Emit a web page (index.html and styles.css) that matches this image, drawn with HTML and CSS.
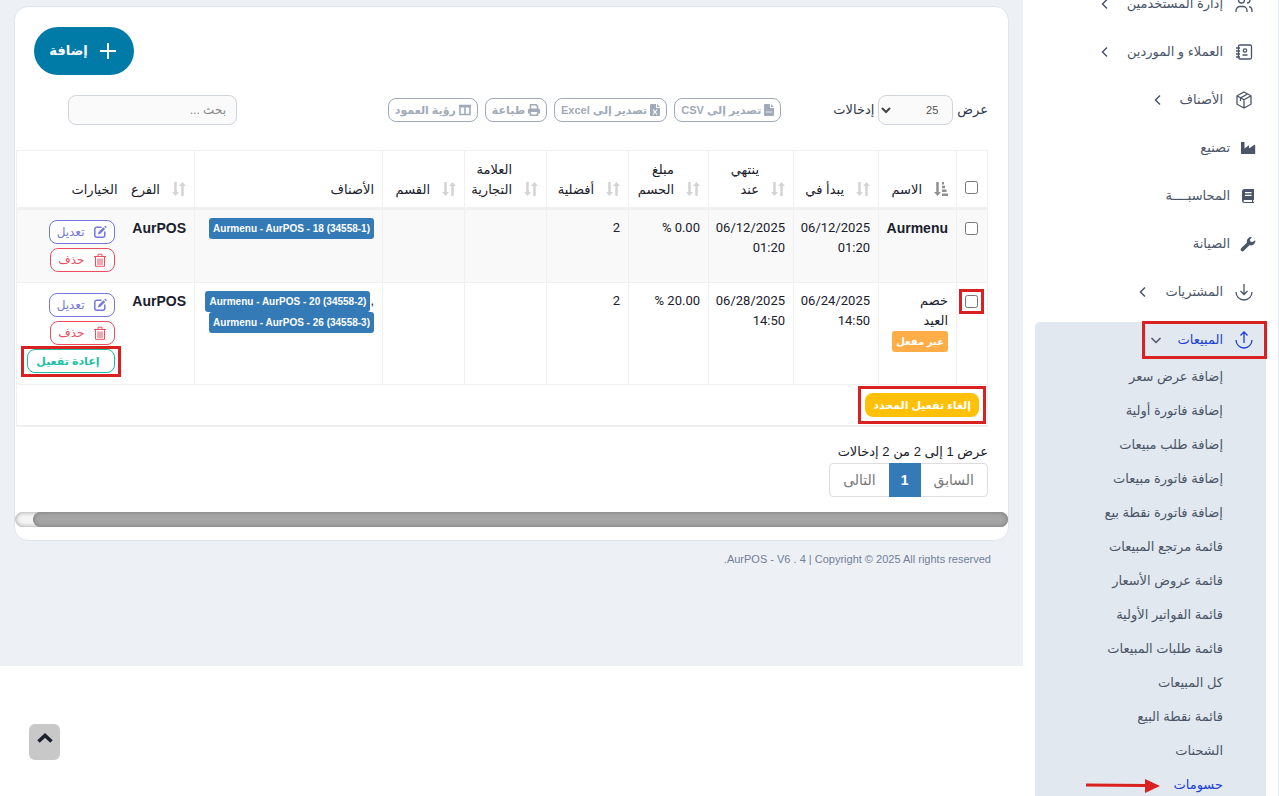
FILE: index.html
```html
<!DOCTYPE html>
<html lang="ar" dir="rtl">
<head>
    <meta charset="UTF-8">
    <meta name="viewport" content="width=device-width, initial-scale=1.0">
    <title>AurPOS</title>
    <link rel="stylesheet" href="styles.css">
</head>
<body>

    <!-- icons -->
    <svg class="sprite" aria-hidden="true">
        <symbol id="i-sort" viewBox="0 0 14 14">
            <path d="M3.500 0v11M10.500 14V3" fill="none" stroke="currentColor" stroke-width="2.500"/>
            <path d="M3.500 14L0 10h7zM10.500 0L14 4H7z" fill="currentColor"/>
        </symbol>
        <symbol id="i-sorted" viewBox="0 0 14 14">
            <path d="M3.500 0v11" fill="none" stroke="currentColor" stroke-width="2.500"/>
            <path d="M3.500 14L0 10h7zM8 0h2v2.500H8zM8 3.800h3v2.500H8zM8 7.600h4.500v2.500H8zM8 11.500h6V14H8z" fill="currentColor"/>
        </symbol>
        <symbol id="i-chevron" viewBox="0 0 12 12">
            <path d="M8 1.500L3.500 6 8 10.500" fill="none" stroke="currentColor" stroke-width="1.500"/>
        </symbol>
        <symbol id="i-edit" viewBox="0 0 14 14">
            <path d="M8.500 2.200H3.800a2 2 0 0 0-2 2v6a2 2 0 0 0 2 2h6a2 2 0 0 0 2-2V6.500" fill="none" stroke="currentColor" stroke-width="1.500"/>
            <path d="M5 9.400l.6-2.300 4.800-4.800 1.700 1.700-4.800 4.800zM11.200 1.500l1-1 1.700 1.700-1 1z" fill="currentColor"/>
        </symbol>
        <symbol id="i-trash" viewBox="0 0 14 14">
            <path d="M1 3.500h12M5 3.200V1.200h4v2M2.500 4v9.300h9V4M5 5.500v6.500M7 5.500v6.500M9 5.500v6.500" fill="none" stroke="currentColor"/>
        </symbol>
    </svg>

    <aside class="sidebar">
        <nav>
            <ul class="menu">
                <li><a class="menu-link" href="#">
                    <svg class="icon" viewBox="0 0 18 18"><circle cx="6.500" cy="5" r="3"/><path d="M1 17v-1.500a4 4 0 0 1 4-4h3a4 4 0 0 1 4 4V17M12 2a3 3 0 0 1 0 6M14 11.700a4 4 0 0 1 3 3.800V17"/></svg>
                    <span>إدارة المستخدمين</span>
                    <svg class="chevron"><use href="#i-chevron"/></svg>
                </a></li>
                <li><a class="menu-link" href="#">
                    <svg class="icon" viewBox="0 0 18 18"><rect x="3.500" y="2" width="13" height="14" rx="1.500"/><circle cx="10" cy="7.500" r="1.700"/><path d="M7.500 12h5M1 5h4M1 8h4M1 11h4M1 14h4"/></svg>
                    <span>العملاء و الموردين</span>
                    <svg class="chevron"><use href="#i-chevron"/></svg>
                </a></li>
                <li><a class="menu-link" href="#">
                    <svg class="icon" viewBox="0 0 18 18"><path d="M9 1l7 3.800v8.400L9 17l-7-3.800V4.800zM2 4.800l7 4 7-4M9 8.800V17M12.500 3l-7 3.900v3"/></svg>
                    <span>الأصناف</span>
                    <svg class="chevron"><use href="#i-chevron"/></svg>
                </a></li>
                <li><a class="menu-link solid" href="#">
                    <svg class="icon" viewBox="0 0 16 16"><path d="M1 2h3.500v6.500L9 5.300v3.200L14 5a.7.7 0 0 1 1.200.5V14H1z"/></svg>
                    <span>تصنيع</span>
                </a></li>
                <li><a class="menu-link solid" href="#">
                    <svg class="icon" viewBox="0 0 16 16"><path fill-rule="evenodd" d="M4.500 1H14v11h-.8v2H14v1H4.500A2.500 2.500 0 0 1 2 12.500v-9A2.500 2.500 0 0 1 4.500 1zM5 4v1.300h6.500V4zM5 6.700V8h6.500V6.700zM4.500 12a1 1 0 0 0 0 2H12v-2z"/></svg>
                    <span>المحاسبــــة</span>
                </a></li>
                <li><a class="menu-link solid" href="#">
                    <svg class="icon" viewBox="0 0 16 16"><path d="M15.200 4.200a4.200 4.200 0 0 1-5.500 4.900l-5.900 5.700a1.800 1.800 0 0 1-2.600-2.600l5.800-5.800A4.200 4.200 0 0 1 12 1.200L9.900 3.400l.3 2.200 2.300.3z"/></svg>
                    <span>الصيانة</span>
                </a></li>
                <li><a class="menu-link" href="#">
                    <svg class="icon" viewBox="0 0 18 18"><path d="M9 1v10.500M5.500 8L9 11.500 12.500 8M1 9a8 8 0 0 0 16 0"/></svg>
                    <span>المشتريات</span>
                    <svg class="chevron"><use href="#i-chevron"/></svg>
                </a></li>
                <li class="open">
                    <a class="menu-link active marked" href="#">
                        <svg class="icon" viewBox="0 0 18 18"><path d="M9 12V1M5.500 4.500L9 1l3.500 3.500M1 9a8 8 0 0 0 16 0"/></svg>
                        <span>المبيعات</span>
                        <svg class="chevron down"><use href="#i-chevron"/></svg>
                    </a>
                    <ul class="submenu">
                        <li><a href="#">إضافة عرض سعر</a></li>
                        <li><a href="#">إضافة فاتورة أولية</a></li>
                        <li><a href="#">إضافة طلب مبيعات</a></li>
                        <li><a href="#">إضافة فاتورة مبيعات</a></li>
                        <li><a href="#">إضافة فاتورة نقطة بيع</a></li>
                        <li><a href="#">قائمة مرتجع المبيعات</a></li>
                        <li><a href="#">قائمة عروض الأسعار</a></li>
                        <li><a href="#">قائمة الفواتير الأولية</a></li>
                        <li><a href="#">قائمة طلبات المبيعات</a></li>
                        <li><a href="#">كل المبيعات</a></li>
                        <li><a href="#">قائمة نقطة البيع</a></li>
                        <li><a href="#">الشحنات</a></li>
                        <li class="current">
                            <a href="#">حسومات</a>
                            <svg class="pointer" viewBox="0 0 75 16"><path d="M1 7l60 .6" stroke="currentColor" stroke-width="3"/><path d="M60 1l15 7-15 7z" fill="currentColor"/></svg>
                        </li>
                    </ul>
                </li>
            </ul>
        </nav>
    </aside>

    <main class="content">
        <section class="card">
            <div class="card-head">
                <button class="btn-add" type="button">
                    <svg viewBox="0 0 16 16"><path d="M8 0v16M0 8h16" stroke="currentColor" stroke-width="2"/></svg>
                    إضافة
                </button>
            </div>

            <div class="toolbar">
                <label class="length">
                    عرض
                    <span class="select-wrap">
                        <select>
                            <option>25</option>
                            <option>50</option>
                            <option>100</option>
                        </select>
                        <svg viewBox="0 0 10 7"><path d="M1 1l4 4 4-4" fill="none" stroke="currentColor" stroke-width="2"/></svg>
                    </span>
                    إدخالات
                </label>
                <div class="exports">
                    <button type="button"><svg class="file" viewBox="0 0 10 12"><path fill="currentColor" d="M1 0h5v4h4v7a1 1 0 0 1-1 1H1a1 1 0 0 1-1-1V1a1 1 0 0 1 1-1zM7 0l3 3H7z"/><path d="M2 8h6" stroke="#fff" stroke-width="1" stroke-dasharray="1.500 .7"/></svg> تصدير إلى CSV</button>
                    <button type="button"><svg class="file" viewBox="0 0 10 12"><path fill="currentColor" d="M1 0h5v4h4v7a1 1 0 0 1-1 1H1a1 1 0 0 1-1-1V1a1 1 0 0 1 1-1zM7 0l3 3H7z"/><path d="M3 5.500l4 5M7 5.500l-4 5" stroke="#fff" stroke-width="1.200"/></svg> تصدير إلى Excel</button>
                    <button type="button"><svg viewBox="0 0 12 12"><path d="M2.500 5V.8h5.700l1.300 1.300V5M2.500 8.500v2.700h7V8.500" fill="none" stroke="currentColor" stroke-width="1.500"/><path d="M1.500 4.500h9A1.500 1.500 0 0 1 12 6v3.500H9.500V8h-7v1.500H0V6a1.500 1.500 0 0 1 1.500-1.500z" fill="currentColor"/></svg> طباعة</button>
                    <button type="button"><svg viewBox="0 0 12 12"><path d="M1 1.500h10v9H1zM6 2v8.500" fill="none" stroke="currentColor" stroke-width="1.600"/><path d="M0 1h12v2.500H0z" fill="currentColor"/></svg> رؤية العمود</button>
                </div>
                <input class="search" type="search" placeholder="بحث ..." aria-label="بحث">
            </div>

            <table class="grid">
                <colgroup>
                    <col class="c-check"><col class="c-name"><col class="c-date"><col class="c-date"><col class="c-amount"><col class="c-num"><col class="c-num"><col class="c-num"><col class="c-items"><col class="c-branch"><col class="c-options">
                </colgroup>
                <thead>
                    <tr>
                        <th><input type="checkbox" aria-label="الكل"></th>
                        <th><span class="th sorted"><svg><use href="#i-sorted"/></svg>الاسم</span></th>
                        <th><span class="th"><svg><use href="#i-sort"/></svg>يبدأ في</span></th>
                        <th><span class="th"><svg><use href="#i-sort"/></svg>ينتهي<br>عند</span></th>
                        <th><span class="th"><svg><use href="#i-sort"/></svg>مبلغ<br>الحسم</span></th>
                        <th><span class="th"><svg><use href="#i-sort"/></svg>أفضلية</span></th>
                        <th><span class="th"><svg><use href="#i-sort"/></svg>العلامة<br>التجارية</span></th>
                        <th><span class="th"><svg><use href="#i-sort"/></svg>القسم</span></th>
                        <th>الأصناف</th>
                        <th><span class="th"><svg><use href="#i-sort"/></svg>الفرع</span></th>
                        <th>الخيارات</th>
                    </tr>
                </thead>
                <tbody>
                    <tr>
                        <td><input type="checkbox" aria-label="Aurmenu"></td>
                        <td class="latin">Aurmenu</td>
                        <td class="num">06/12/2025<br>01:20</td>
                        <td class="num">06/12/2025<br>01:20</td>
                        <td class="num">0.00 %</td>
                        <td class="num">2</td>
                        <td></td>
                        <td></td>
                        <td><span class="badge" dir="ltr">Aurmenu - AurPOS - 18 (34558-1)</span></td>
                        <td class="latin">AurPOS</td>
                        <td>
                            <div class="actions">
                                <button class="edit" type="button"><svg><use href="#i-edit"/></svg>تعديل</button>
                                <button class="delete" type="button"><svg><use href="#i-trash"/></svg>حذف</button>
                            </div>
                        </td>
                    </tr>
                    <tr>
                        <td><input class="marked" type="checkbox" aria-label="خصم العيد"></td>
                        <td>خصم<br>العيد<br><span class="badge warn">غير مفعل</span></td>
                        <td class="num">06/24/2025<br>14:50</td>
                        <td class="num">06/28/2025<br>14:50</td>
                        <td class="num">20.00 %</td>
                        <td class="num">2</td>
                        <td></td>
                        <td></td>
                        <td class="items">,<span class="badge" dir="ltr">Aurmenu - AurPOS - 20 (34558-2)</span><br><span class="badge" dir="ltr">Aurmenu - AurPOS - 26 (34558-3)</span></td>
                        <td class="latin">AurPOS</td>
                        <td>
                            <div class="actions">
                                <button class="edit" type="button"><svg><use href="#i-edit"/></svg>تعديل</button>
                                <button class="delete" type="button"><svg><use href="#i-trash"/></svg>حذف</button>
                                <div class="activate-box marked">
                                    <button class="activate" type="button">إعادة تفعيل</button>
                                </div>
                            </div>
                        </td>
                    </tr>
                </tbody>
                <tfoot>
                    <tr>
                        <td colspan="11">
                            <div class="deactivate-box marked">
                                <button class="btn-deactivate" type="button">إلغاء تفعيل المحدد</button>
                            </div>
                        </td>
                    </tr>
                </tfoot>
            </table>

            <div class="info">عرض 1 إلى 2 من 2 إدخالات</div>
            <div class="pagination">
                <a href="#">السابق</a>
                <a class="active" href="#">1</a>
                <a href="#">التالى</a>
            </div>

            <div class="scrollbar"><div class="thumb"></div></div>
        </section>

        <footer>AurPOS - V6 . 4 | Copyright © 2025 All rights reserved.</footer>
    </main>

    <button class="scroll-top" type="button" aria-label="أعلى">
        <svg viewBox="0 0 16 10"><path d="M1.500 8.500L8 2.500l6.500 6" fill="none" stroke="currentColor" stroke-width="3.500"/></svg>
    </button>

</body>
</html>
```

FILE: styles.css
```css
:root {
    --bg: #edf1f6;
    --text: #1a202c;
    --muted: #4a5568;
    --line: #f0f0f0;
    --blue: #337ab7;
    --mark: #d92121;
}

* {
    box-sizing: border-box;
}

body {
    margin: 0;
    display: flex;
    align-items: flex-start;
    height: 100vh;
    overflow: hidden;
    font-family: "Liberation Sans", "DejaVu Sans", sans-serif;
    font-size: 13px;
    line-height: 20px;
    color: var(--text);
    background: #fff;
}

a {
    color: inherit;
    text-decoration: none;
}

ul {
    list-style: none;
    margin: 0;
    padding: 0;
}

button,
select,
input {
    font: inherit;
}

button {
    cursor: pointer;
}

.sprite {
    position: absolute;
    width: 0;
    height: 0;
}

.marked {
    outline: 3px solid var(--mark);
}

/* Sidebar */
.sidebar {
    flex: 0 0 256px;
    height: 100vh;
    overflow: hidden;
    padding: 0 12px;
    border-right: 1px solid #e6ebf3;
    color: var(--muted);
}

.menu {
    display: flex;
    flex-direction: column;
    gap: 12px;
    margin-top: -14px;
}

.menu-link {
    display: flex;
    align-items: center;
    width: fit-content;
    height: 36px;
    padding: 0 13px 0 7px;
}

.menu-link .icon {
    width: 18px;
    height: 18px;
    margin-left: 12px;
    fill: none;
    stroke: currentColor;
    stroke-width: 1.3;
}

.menu-link.solid {
    padding-right: 10px;
}

.menu-link.solid .icon {
    width: 16px;
    height: 16px;
    margin-left: 10px;
    fill: currentColor;
    stroke: none;
}

.chevron {
    width: 12px;
    height: 12px;
    margin-right: 16px;
}

.chevron.down {
    transform: rotate(-90deg);
    color: var(--muted);
}

.open {
    background: #e2e8ef;
    border-radius: 5px 5px 0 0;
}

.menu-link.active {
    color: #1c3fd7;
    outline-offset: -2px;
}

.submenu {
    padding-top: 2px;
}

.submenu li {
    height: 34px;
    padding-right: 43px;
    line-height: 34px;
}

.submenu .current {
    position: relative;
    color: #1c3fd7;
}

.pointer {
    position: absolute;
    left: 50px;
    top: 10px;
    width: 75px;
    height: 16px;
    color: var(--mark);
}

/* Content */
.content {
    flex: 1;
    min-width: 0;
    padding: 6px 14px 97px 14px;
    background: var(--bg);
}

.card {
    background: #fff;
    border: 1px solid #dfe5ee;
    border-radius: 14px;
    padding: 20px 0 13px;
}

.card-head {
    display: flex;
    justify-content: flex-end;
    padding-left: 19px;
}

.btn-add {
    display: flex;
    align-items: center;
    justify-content: center;
    gap: 12px;
    width: 100px;
    height: 48px;
    padding: 0 3px 0 0;
    border: 0;
    border-radius: 24px;
    background: #007ba7;
    color: #fff;
    font-weight: bold;
}

.btn-add svg {
    width: 16px;
    height: 16px;
}

.toolbar {
    display: flex;
    align-items: center;
    margin-top: 20px;
    padding: 0 20px 0 53px;
}

.length {
    display: flex;
    align-items: center;
    gap: 4px;
    color: #2d3748;
}

.select-wrap {
    position: relative;
}

.select-wrap select {
    display: block;
    width: 75px;
    height: 30px;
    padding: 0 14px;
    appearance: none;
    border: 1px solid #d0d5db;
    border-radius: 8px;
    background: #fafafa;
    color: #555;
    font-size: 11px;
}

.select-wrap svg {
    position: absolute;
    left: 3px;
    top: 12px;
    width: 10px;
    height: 7px;
    color: #444;
}

.exports {
    display: flex;
    gap: 7px;
    margin-right: 52px;
}

.exports button {
    display: flex;
    align-items: center;
    gap: 3px;
    height: 24px;
    padding: 0 6px;
    border: 1px solid #a0aab8;
    border-radius: 8px;
    background: #fff;
    color: #a0aab8;
    font-size: 11px;
    font-weight: bold;
    white-space: nowrap;
}

.exports svg {
    width: 12px;
    height: 12px;
}

.exports .file {
    width: 10px;
}

.search {
    width: 169px;
    height: 30px;
    margin-right: auto;
    padding: 0 10px;
    border: 1px solid #cfd4dc;
    border-radius: 8px;
    background: #fafafa;
    font-size: 12px;
}

.search::placeholder {
    color: #888;
}

/* Table */
.grid {
    width: calc(100% - 21px);
    margin: 25px 20px 0 1px;
    table-layout: fixed;
    border-collapse: collapse;
    border: 1px solid var(--line);
}

.c-check { width: 31px; }
.c-name { width: 78px; }
.c-date { width: 85px; }
.c-amount { width: 80px; }
.c-num { width: 82px; }
.c-branch { width: 69px; }
.c-options { width: 109px; }

.grid th,
.grid td {
    padding: 8px 8px 10px;
    border-left: 1px solid var(--line);
    text-align: right;
    vertical-align: top;
    font-weight: normal;
}

.grid th {
    height: 58px;
    padding: 8px 8px 7px;
    vertical-align: bottom;
    border-bottom: 3px solid var(--line);
    white-space: nowrap;
}

.grid th:nth-child(10),
.grid td:nth-child(10) {
    border-left: 0;
}

.th {
    display: flex;
    align-items: flex-end;
    gap: 12px;
}

.th svg {
    flex: none;
    width: 14px;
    height: 14px;
    margin-bottom: 4px;
    color: #d4d4d4;
}

.th.sorted svg {
    color: #909090;
}

.grid tbody tr {
    border-bottom: 1px solid var(--line);
}

.grid tbody tr:nth-child(odd) {
    background: #f9f9f9;
}

.grid input {
    display: block;
    width: 13px;
    height: 13px;
    margin: 4px 1px;
}

.grid th input {
    margin-bottom: 6px;
}

.grid input.marked {
    outline-offset: 3px;
}

.grid td.latin {
    font-size: 14px;
    font-weight: bold;
}

.grid td.num {
    font-family: Roboto, "DejaVu Sans", sans-serif;
}

.grid td.items {
    white-space: nowrap;
}

.badge {
    padding: 5px 4px;
    border-radius: 3px;
    background: var(--blue);
    color: #fff;
    font-size: 10px;
    font-weight: bold;
    white-space: nowrap;
}

.badge.warn {
    background: #ffad46;
}

.actions {
    display: flex;
    flex-direction: column;
    align-items: flex-start;
    gap: 4px;
    padding: 2px 3px 0 0;
}

.actions button {
    display: flex;
    align-items: center;
    gap: 8px;
    height: 24px;
    padding: 0 7px;
    border: 1px solid currentColor;
    border-radius: 8px;
    background: #fff;
    font-size: 12px;
    white-space: nowrap;
}

.actions svg {
    width: 14px;
    height: 14px;
}

.actions .edit {
    color: #7477dc;
}

.actions .delete {
    color: #ea4f5d;
}

.activate-box {
    margin: 0 -3px;
    padding: 0 3px 1px;
}

.actions .activate {
    padding: 0 14px 0 8px;
    color: #1bbfa4;
    font-size: 11px;
    font-weight: bold;
}

.grid tfoot td {
    padding: 8px;
    border-bottom: 2px solid var(--line);
}

.deactivate-box {
    width: fit-content;
    outline-offset: 4px;
}

.btn-deactivate {
    display: block;
    height: 24px;
    padding: 0 8px;
    border: 0;
    border-radius: 8px;
    background: #ffc107;
    color: #fff;
    font-size: 11px;
    font-weight: bold;
}

.info {
    margin: 15px 20px 0;
}

.pagination {
    display: flex;
    width: fit-content;
    margin: 1px 20px 0;
    border: 1px solid #ddd;
    border-radius: 4px;
    color: #777;
    font-size: 14px;
}

.pagination a {
    padding: 6px 13px;
}

.pagination .active {
    margin: -1px 0;
    padding: 7px 12px;
    background: var(--blue);
    color: #fff;
    font-weight: bold;
}

.scrollbar {
    height: 15px;
    margin-top: 15px;
    border-radius: 8px;
    background: #f5f5f5;
    box-shadow: inset 0 0 5px #999;
}

.thumb {
    height: 15px;
    margin-left: 18px;
    border-radius: 8px;
    background: #a6a6a6;
    box-shadow: inset 0 0 5px #777;
}

footer {
    padding: 8px 18px 0;
    color: #718096;
    font-size: 11px;
}

.scroll-top {
    position: fixed;
    left: 29px;
    bottom: 36px;
    width: 31px;
    height: 36px;
    padding: 0 0 6px;
    border: 0;
    border-radius: 6px;
    background: #c8c8c8;
    color: #1a202c;
}

.scroll-top svg {
    width: 16px;
    height: 10px;
}
```
